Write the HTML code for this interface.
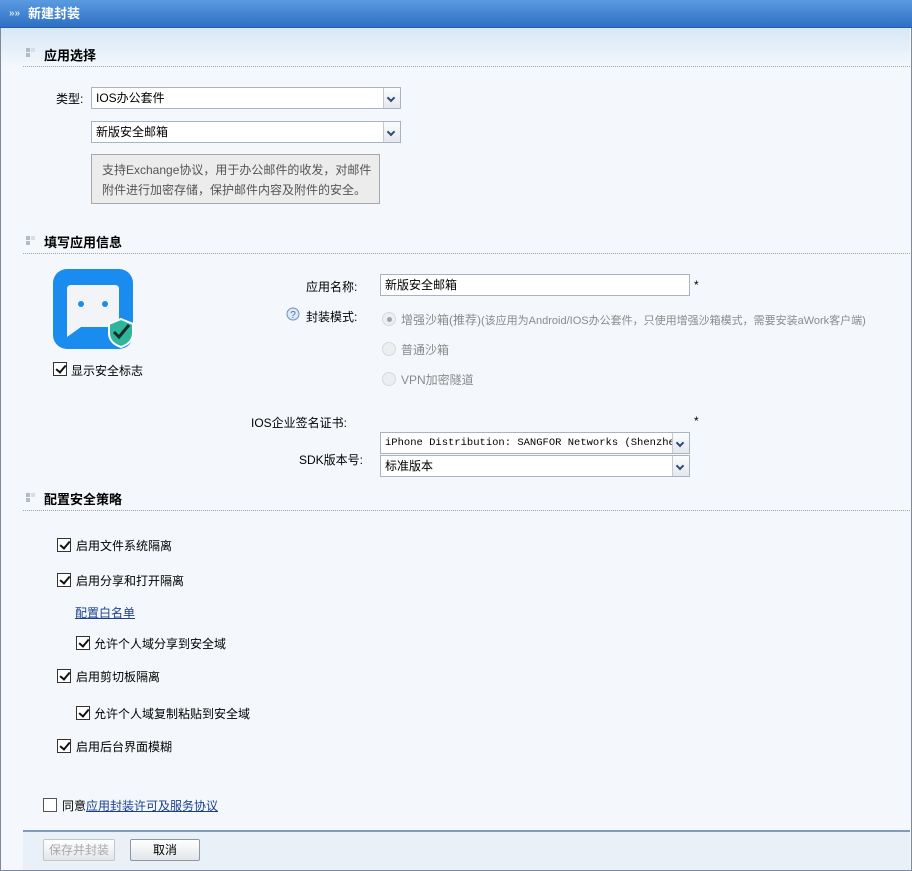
<!DOCTYPE html>
<html><head><meta charset="utf-8"><style>
*{margin:0;padding:0;box-sizing:border-box}
body{width:912px;height:871px;overflow:hidden;font-family:"Liberation Sans","Noto Sans CJK SC",sans-serif;font-size:12px;color:#000;background:#fff;position:relative}
.frame{position:absolute;left:0;top:0;width:912px;height:871px;border:1px solid #7f8a98;border-top:none;background:#f4f8fc}
.title{position:absolute;left:0;top:0;width:912px;height:28px;background:linear-gradient(#5a9be0,#2d6fc4);color:#fff;font-weight:bold;font-size:13px;line-height:28px;padding-left:28px;border-bottom:1px solid #285ea8}
.title span{position:absolute;left:9px;top:0;font-size:10px;color:#cfe2fa}
.topgrad{position:absolute;left:1px;top:28px;width:909px;height:40px;background:linear-gradient(#d7e7f7,#f4f8fc)}
.abs{position:absolute}
.sec{position:absolute;left:44px;font-weight:bold;font-size:13px}
.sq{position:absolute;left:26px;width:10px;height:10px}
.sq i{position:absolute;width:4px;height:4px;background:#b3bcc6}
.dot{position:absolute;left:23px;width:887px;border-top:1px dotted #9aa4ae}
.sel{position:absolute;height:22px;border:1px solid #a9b4c0;background:#fff;padding-left:4px;line-height:20px}
.sel b{position:absolute;right:0;top:0;width:17px;height:20px;border-left:1px solid #c2cad4;background:linear-gradient(#fbfcfd,#e4e9ee)}
.sel b:after{content:"";position:absolute;left:4px;top:7px;width:4px;height:4px;border-right:2px solid #2c4c74;border-bottom:2px solid #2c4c74;transform:rotate(45deg)}
.cb{position:absolute;width:14px;height:14px;border:1px solid #333;background:#fff}
.cb.on:after{content:"";position:absolute;left:3.5px;top:0px;width:4px;height:8px;border-right:2px solid #111;border-bottom:2px solid #111;transform:rotate(40deg)}
.lbl{position:absolute;white-space:nowrap}
.radio{position:absolute;width:14px;height:14px;border-radius:50%;border:1px solid #d6dadf;background:#eceef0}
.gray{color:#8a8a8a}
.btn{position:absolute;height:22px;border:1px solid #8e98a3;border-radius:2px;background:linear-gradient(#fff,#e2e6ea);text-align:center;line-height:20px}
</style></head><body>
<div class="frame"></div>
<div class="topgrad"></div>
<div class="title"><span>»»</span>新建封装</div>

<div class="sq" style="top:48px"><i style="left:0;top:0"></i><i style="left:5px;top:0;background:#d8dde2"></i><i style="left:0;top:5px"></i></div>
<div class="sec" style="top:45px">应用选择</div>
<div class="dot" style="top:66px"></div>

<div class="lbl" style="left:56px;top:90px">类型:</div>
<div class="sel" style="left:91px;top:87px;width:310px">IOS办公套件<b></b></div>
<div class="sel" style="left:91px;top:121px;width:310px">新版安全邮箱<b></b></div>
<div class="abs" style="left:91px;top:154px;width:289px;height:50px;border:1px solid #a8a8a8;background:#ececec;color:#555;padding:5px 0 0 10px;line-height:20px;font-size:12px">支持Exchange协议，用于办公邮件的收发，对邮件<br>附件进行加密存储，保护邮件内容及附件的安全。</div>

<div class="sq" style="top:236px"><i style="left:0;top:0"></i><i style="left:5px;top:0;background:#d8dde2"></i><i style="left:0;top:5px"></i></div>
<div class="sec" style="top:232px">填写应用信息</div>
<div class="dot" style="top:253px"></div>

<svg class="abs" style="left:53px;top:269px" width="80" height="80" viewBox="0 0 80 80">
<rect width="80" height="80" rx="14" fill="#1a8cf0"/>
<path d="M18 16 H62 Q66 16 66 20 V54 Q66 58 62 58 H28 L14 68 V20 Q14 16 18 16 Z" fill="#f2f4f7"/>
<circle cx="28" cy="35" r="3" fill="#1a8cf0"/><circle cx="52" cy="35" r="3" fill="#1a8cf0"/>
<path d="M68 50 L80 55 V64 C80 72 74 76 68 78 C62 76 56 72 56 64 V55 Z" fill="#2fb59a" stroke="#fff" stroke-width="2"/>
<path d="M61 63 L66 68 L76 56" stroke="#1b2a2a" stroke-width="3" fill="none"/>
</svg>
<div class="cb on" style="left:53px;top:362px"></div>
<div class="lbl" style="left:71px;top:362px">显示安全标志</div>

<div class="lbl" style="left:306px;top:278px">应用名称:</div>
<div class="sel" style="left:380px;top:274px;width:310px">新版安全邮箱</div>
<div class="lbl" style="left:694px;top:278px">*</div>
<svg class="abs" style="left:286px;top:307px" width="14" height="14"><circle cx="7" cy="7" r="6" fill="#dfe9f5" stroke="#6b8fbf"/><text x="7" y="11" font-size="10" text-anchor="middle" fill="#4a6fa5" font-family="Liberation Sans">?</text></svg>
<div class="lbl" style="left:306px;top:308px">封装模式:</div>
<div class="radio" style="left:382px;top:312px"></div><div class="abs" style="left:387px;top:317px;width:5px;height:5px;border-radius:50%;background:#a0a4a8"></div>
<div class="lbl gray" style="left:401px;top:311px">增强沙箱(推荐)<span style="font-size:11px">(该应用为Android/IOS办公套件，只使用增强沙箱模式，需要安装aWork客户端)</span></div>
<div class="radio" style="left:382px;top:342px"></div>
<div class="lbl gray" style="left:401px;top:341px">普通沙箱</div>
<div class="radio" style="left:382px;top:372px"></div>
<div class="lbl gray" style="left:401px;top:371px">VPN加密隧道</div>

<div class="lbl" style="left:251px;top:414px">IOS企业签名证书:</div>
<div class="lbl" style="left:694px;top:414px">*</div>
<div class="sel" style="left:380px;top:432px;width:310px;font-family:'Liberation Mono',monospace;font-size:10.5px;overflow:hidden;white-space:nowrap">iPhone Distribution: SANGFOR Networks (Shenzhen)<b></b></div>
<div class="lbl" style="left:299px;top:451px">SDK版本号:</div>
<div class="sel" style="left:380px;top:455px;width:310px">标准版本<b></b></div>

<div class="sq" style="top:493px"><i style="left:0;top:0"></i><i style="left:5px;top:0;background:#d8dde2"></i><i style="left:0;top:5px"></i></div>
<div class="sec" style="top:489px">配置安全策略</div>
<div class="dot" style="top:510px"></div>

<div class="cb on" style="left:57px;top:538px"></div><div class="lbl" style="left:76px;top:537px">启用文件系统隔离</div>
<div class="cb on" style="left:57px;top:573px"></div><div class="lbl" style="left:76px;top:572px">启用分享和打开隔离</div>
<div class="lbl" style="left:75px;top:604px;color:#1a3f8c;text-decoration:underline">配置白名单</div>
<div class="cb on" style="left:76px;top:636px"></div><div class="lbl" style="left:94px;top:635px">允许个人域分享到安全域</div>
<div class="cb on" style="left:57px;top:669px"></div><div class="lbl" style="left:76px;top:668px">启用剪切板隔离</div>
<div class="cb on" style="left:76px;top:706px"></div><div class="lbl" style="left:94px;top:705px">允许个人域复制粘贴到安全域</div>
<div class="cb on" style="left:57px;top:739px"></div><div class="lbl" style="left:76px;top:738px">启用后台界面模糊</div>

<div class="cb" style="left:43px;top:798px;border-color:#555"></div>
<div class="lbl" style="left:62px;top:797px">同意<span style="color:#1a3f8c;text-decoration:underline">应用封装许可及服务协议</span></div>

<div class="abs" style="left:23px;top:830px;width:887px;height:40px;border-top:2px solid #7f9bbf;background:#e9f0f7"></div>
<div class="btn" style="left:43px;top:839px;width:72px;color:#a8a8a8;border-color:#c0c6cc">保存并封装</div>
<div class="btn" style="left:130px;top:839px;width:70px">取消</div>
</body></html>
